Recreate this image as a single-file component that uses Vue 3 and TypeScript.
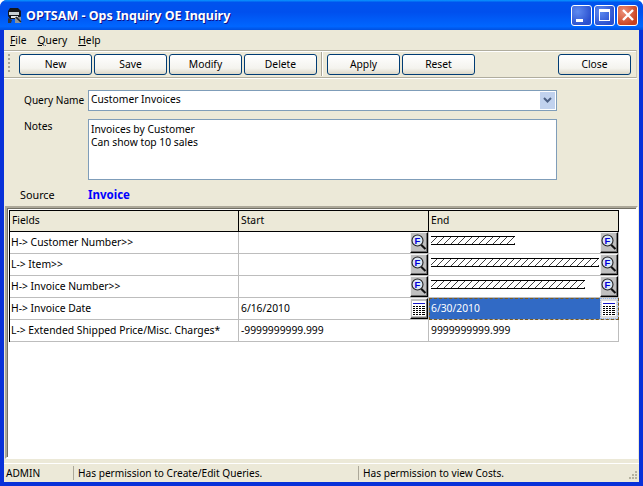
<script setup lang="ts">
interface Row { field: string; start: string; end: string; startBtn: 'find' | 'cal' | ''; endBtn: 'find' | 'cal' | ''; hatch: number; sel: boolean }
const rows: Row[] = [
  { field: 'H-> Customer Number>>', start: '', end: '', startBtn: 'find', endBtn: 'find', hatch: 84, sel: false },
  { field: 'L-> Item>>', start: '', end: '', startBtn: 'find', endBtn: 'find', hatch: 168, sel: false },
  { field: 'H-> Invoice Number>>', start: '', end: '', startBtn: 'find', endBtn: 'find', hatch: 154, sel: false },
  { field: 'H-> Invoice Date', start: '6/16/2010', end: '6/30/2010', startBtn: 'cal', endBtn: 'cal', hatch: 0, sel: true },
  { field: 'L-> Extended Shipped Price/Misc. Charges*', start: '-9999999999.999', end: '9999999999.999', startBtn: '', endBtn: '', hatch: 0, sel: false },
]
const menus = [['F', 'ile'], ['Q', 'uery'], ['H', 'elp']]
const group1 = ['New', 'Save', 'Modify', 'Delete']
const group2 = ['Apply', 'Reset']
</script>

<template>
  <div class="win">
    <div class="title">
      <svg class="appicon" width="18" height="18" viewBox="0 0 18 18">
        <path d="M4 2h8l3 3v5l-2 3H4L2 10V5z" fill="#15171c"/>
        <path d="M3 6h10v3H3z" fill="#c8d0d4"/>
        <path d="M5 10h7v2H5z" fill="#e4e6e6"/>
        <path d="M9 11h6v6H9z" fill="#8f9498"/>
        <path d="M2 12l4 2-1 3H2z" fill="#30343c"/>
        <path d="M10 11l5 5" stroke="#22262c" stroke-width="1.500"/>
      </svg>
      <span class="title-text">OPTSAM - Ops Inquiry OE Inquiry</span>
      <div class="caps">
        <span class="cap"><i class="min"></i></span>
        <span class="cap"><i class="max"></i></span>
        <span class="cap close">
          <svg width="14" height="14" viewBox="0 0 14 14"><path d="M2 2l10 10M12 2L2 12" stroke="#fff" stroke-width="2.400"/></svg>
        </span>
      </div>
    </div>
    <div class="body">
      <div class="menu">
        <span v-for="m in menus" :key="m[0]" class="menu-item"><u>{{ m[0] }}</u>{{ m[1] }}</span>
      </div>
      <div class="toolbar">
        <span class="grip"></span>
        <button v-for="b in group1" :key="b" class="btn">{{ b }}</button>
        <span class="sep"></span>
        <button v-for="b in group2" :key="b" class="btn">{{ b }}</button>
        <span class="spacer"></span>
        <button class="btn">Close</button>
      </div>
      <div class="form">
        <div class="frow name-row">
          <label class="lbl">Query Name</label>
          <div class="combo">
            <span class="combo-text">Customer Invoices</span>
            <span class="arrow">
              <svg width="9" height="7" viewBox="0 0 9 7"><path d="M1 1l3.500 3.500L8 1" fill="none" stroke="#4d6185" stroke-width="2"/></svg>
            </span>
          </div>
        </div>
        <div class="frow notes-row">
          <label class="lbl">Notes</label>
          <div class="notes">Invoices by Customer<br>Can show top 10 sales</div>
        </div>
        <div class="frow source-row">
          <label class="lbl src">Source</label>
          <span class="src-val">Invoice</span>
        </div>
      </div>
      <div class="frame">
        <svg width="0" height="0" class="defs">
          <defs>
            <pattern id="hatchp" width="7" height="7" patternUnits="userSpaceOnUse">
              <path d="M0 7L7 0" stroke="#000" stroke-width=".75"/>
            </pattern>
          </defs>
        </svg>
        <div class="grid">
          <div class="ghead">
            <div class="hc c1">Fields</div>
            <div class="hc c2">Start</div>
            <div class="hc c3">End</div>
          </div>
          <div v-for="r in rows" :key="r.field" class="grow">
            <div class="cell c1">{{ r.field }}</div>
            <div class="cell c2">
              <span class="val">{{ r.start }}</span>
              <span v-if="r.startBtn" class="gbtn">
                <svg v-if="r.startBtn === 'find'" width="16" height="17" viewBox="0 0 16 17">
                  <path d="M10 10.500l4.500 4.500" stroke="#111" stroke-width="2.200"/>
                  <path d="M11 10l4 4" stroke="#888" stroke-width=".7"/>
                  <circle cx="6.500" cy="6.500" r="5.500" fill="#dce6f4" stroke="#222" stroke-width="1.100"/>
                  <text x="6.500" y="10" text-anchor="middle" class="ftext">F</text>
                </svg>
                <svg v-else width="14" height="15" viewBox="0 0 14 15" shape-rendering="crispEdges">
                  <rect x="0" y="0" width="14" height="15" fill="#fff"/>
                  <path d="M1 2h12v1H1z" fill="#1414c8"/>
                  <path d="M1 5h2v1H1zM4 5h2v1H4zM7 5h2v1H7zM10 5h3v1h-3zM1 7h2v1H1zM4 7h2v1H4zM7 7h2v1H7zM10 7h3v1h-3zM1 9h2v1H1zM4 9h2v1H4zM7 9h2v1H7zM10 9h3v1h-3zM1 11h2v1H1zM4 11h2v1H4zM7 11h2v1H7zM10 11h3v1h-3zM1 13h2v1H1zM4 13h2v1H4zM7 13h2v1H7zM10 13h3v1h-3z" fill="#000"/>
                </svg>
              </span>
            </div>
            <div class="cell c3" :class="{ sel: r.sel }">
              <span class="val">{{ r.end }}</span>
              <svg v-if="r.hatch" class="hatch" :width="r.hatch" height="10">
                <rect x="0" y="1" :width="r.hatch" height="7" fill="url(#hatchp)"/>
                <path :d="'M0 .5H' + r.hatch + 'M0 8.500H' + r.hatch" stroke="#000" stroke-width="1"/>
              </svg>
              <span v-if="r.endBtn" class="gbtn" :class="{ selbtn: r.sel }">
                <svg v-if="r.endBtn === 'find'" width="16" height="17" viewBox="0 0 16 17">
                  <path d="M10 10.500l4.500 4.500" stroke="#111" stroke-width="2.200"/>
                  <path d="M11 10l4 4" stroke="#888" stroke-width=".7"/>
                  <circle cx="6.500" cy="6.500" r="5.500" fill="#dce6f4" stroke="#222" stroke-width="1.100"/>
                  <text x="6.500" y="10" text-anchor="middle" class="ftext">F</text>
                </svg>
                <svg v-else width="14" height="15" viewBox="0 0 14 15" shape-rendering="crispEdges">
                  <rect x="0" y="0" width="14" height="15" fill="#fff"/>
                  <path d="M1 2h12v1H1z" fill="#1414c8"/>
                  <path d="M1 5h2v1H1zM4 5h2v1H4zM7 5h2v1H7zM10 5h3v1h-3zM1 7h2v1H1zM4 7h2v1H4zM7 7h2v1H7zM10 7h3v1h-3zM1 9h2v1H1zM4 9h2v1H4zM7 9h2v1H7zM10 9h3v1h-3zM1 11h2v1H1zM4 11h2v1H4zM7 11h2v1H7zM10 11h3v1h-3zM1 13h2v1H1zM4 13h2v1H4zM7 13h2v1H7zM10 13h3v1h-3z" fill="#000"/>
                </svg>
              </span>
            </div>
          </div>
        </div>
      </div>
      <div class="status">
        <span class="st st1">ADMIN</span>
        <span class="st st2">Has permission to Create/Edit Queries.</span>
        <span class="st st3">Has permission to view Costs.</span>
        <svg class="sgrip" width="12" height="12" viewBox="0 0 12 12">
          <path d="M9 2h2v2H9zM6 5h2v2H6zM9 5h2v2H9zM3 8h2v2H3zM6 8h2v2H6zM9 8h2v2H9z" fill="#b5b29f"/>
        </svg>
      </div>
    </div>
  </div>
</template>

<style>
html, body { background: #fff; overflow: hidden; }
</style>

<style scoped>
.win {
  width: 643px;
  height: 486px;
  display: flex;
  flex-direction: column;
  overflow: hidden;
  border-radius: 7px 7px 0 0;
  background: #0831d9;
  font-family: "Noto Sans", "Liberation Sans", sans-serif;
  font-size: 10.300px;
  color: #000;
}
.title {
  height: 30px;
  flex: none;
  display: flex;
  align-items: center;
  padding: 0 5px 0 6px;
  background: linear-gradient(180deg, #0997ff 0, #0053ee 8%, #0050ee 40%, #0066ff 88%, #0050e0 100%);
}
.appicon { margin-right: 2px; }
.title-text {
  color: #fff;
  font-weight: 700;
  font-size: 12.500px;
  text-shadow: 1px 1px 0 #0f1089;
}
.caps { margin-left: auto; display: flex; gap: 2px; }
.cap {
  width: 21px;
  height: 21px;
  box-sizing: border-box;
  border: 1px solid #fff;
  border-radius: 3px;
  background: radial-gradient(circle at 30% 30%, #5f8bf0, #2a50cf 75%);
  display: flex;
  align-items: center;
  justify-content: center;
  position: relative;
}
.cap.close { background: radial-gradient(circle at 30% 30%, #ec9078, #c9411f 75%); }
.cap .min { position: absolute; left: 4px; bottom: 3px; width: 7px; height: 3px; background: #fff; }
.cap .max { width: 11px; height: 12px; box-sizing: border-box; border: 1px solid #fff; border-top-width: 3px; }
.body {
  flex: 1;
  min-height: 0;
  margin: 0 4px 4px;
  background: #ece9d8;
  display: flex;
  flex-direction: column;
}
.menu {
  height: 20px;
  flex: none;
  display: flex;
  align-items: center;
  padding-left: 6px;
  gap: 11px;
}
.toolbar {
  height: 28px;
  flex: none;
  box-sizing: border-box;
  margin: 0 2px 0 0;
  border-top: 1px solid #b0ad9e;
  border-bottom: 1px solid #b0ad9e;
  border-right: 1px solid #d0cdbc;
  box-shadow: inset 0 1px 0 #fff, 0 1px 0 #fff;
  display: flex;
  align-items: center;
  padding-left: 4px;
  padding-right: 5px;
  gap: 2px;
}
.grip {
  width: 2px;
  height: 20px;
  margin-right: 7px;
  background: repeating-linear-gradient(180deg, #a8a594 0 2px, transparent 2px 4px);
}
.sep {
  width: 2px;
  height: 24px;
  margin: 0 2px;
  background: linear-gradient(90deg, #aca899 0 1px, #fff 1px 2px);
}
.spacer { flex: 1; }
.btn {
  width: 73px;
  height: 21px;
  padding: 0 0 1px;
  box-sizing: border-box;
  border: 1px solid #003c74;
  border-radius: 3px;
  background: linear-gradient(180deg, #fff 0, #f4f3ee 70%, #dcd8c8 100%);
  font: inherit;
  color: #000;
}
.form { flex: none; padding-top: 12px; }
.frow { display: flex; }
.lbl { width: 84px; padding-left: 20px; box-sizing: border-box; }
.name-row { align-items: center; height: 21px; }
.name-row .lbl { padding-bottom: 1px; font-size: 10.100px; }
.combo {
  width: 469px;
  height: 21px;
  box-sizing: border-box;
  border: 1px solid #7f9db9;
  background: #fff;
  display: flex;
  align-items: center;
  padding: 0 1px 0 2px;
}
.combo-text { flex: 1; padding-bottom: 3px; }
.arrow {
  width: 15px;
  height: 17px;
  background: #c1d2ee;
  display: flex;
  align-items: center;
  justify-content: center;
}
.notes-row { margin-top: 8px; }
.notes {
  width: 469px;
  height: 61px;
  box-sizing: border-box;
  border: 1px solid #7f9db9;
  background: #fff;
  padding: 3px 2px;
  line-height: 13px;
}
.source-row { margin-top: 7px; align-items: center; height: 15px; }
.lbl.src { padding-left: 16px; font-size: 10.800px; }
.src-val { color: #0000ff; font-weight: 700; font-size: 11.500px; }
.frame {
  flex: 1;
  min-height: 0;
  margin: 4px 1px 0;
  box-sizing: border-box;
  border: 2px solid;
  border-color: #aca899 #fff #fff #aca899;
  background: #fff;
  padding: 2px;
  box-shadow: inset 1px 1px 0 #716f64;
}
.defs { position: absolute; }
.ghead { display: flex; height: 22px; box-sizing: border-box; border: 1px solid #000; border-right: 0; width: 610px; background: #ece9d8; }
.hc { box-sizing: border-box; border-right: 1px solid #000; padding: 2px 2px 0; }
.ghead .c1 { width: 229px; }
.ghead .c2 { width: 190px; }
.ghead .c3 { width: 190px; }
.grow { display: flex; height: 22px; width: 610px; box-sizing: border-box; border-left: 1px solid #000; }
.cell {
  box-sizing: border-box;
  border-right: 1px solid #bdbdbd;
  border-bottom: 1px solid #bdbdbd;
  position: relative;
  padding: 3px 2px 0;
  white-space: nowrap;
}
.grow .c1 { width: 229px; padding-left: 1px; font-size: 10.350px; }
.grow .c2 { width: 190px; }
.grow .c3 { width: 190px; }
.val { display: inline-block; }
.gbtn {
  position: absolute;
  right: 0;
  top: 0;
  width: 18px;
  height: 21px;
  box-sizing: border-box;
  background: #c0c0c0;
  border: 1px solid;
  border-color: #f4f4f4 #000 #000 #f4f4f4;
  box-shadow: inset -1px -1px 0 #707070;
  display: flex;
  align-items: center;
  justify-content: center;
}
.gbtn.selbtn { background: #dcdcdc; border: 1px dotted #8fb4ee; box-shadow: none; }
.sel { background: #316ac5; color: #fff; outline: 1px dashed #7a5a20; outline-offset: -1px; }
.hatch { position: absolute; left: 2px; top: 4px; display: block; }
.ftext { font-family: "Liberation Sans", sans-serif; font-size: 9.500px; font-weight: 700; fill: #0000d8; }
.status {
  height: 19px;
  flex: none;
  margin-top: 4px;
  display: flex;
  align-items: center;
  position: relative;
  box-shadow: inset 0 1px 0 #fff;
  font-size: 10.150px;
  padding-top: 1px;
  box-sizing: border-box;
}
.st { box-sizing: border-box; white-space: nowrap; padding-left: 2px; }
.st1 { width: 69px; }
.st2 { width: 285px; border-left: 1px solid #aca899; padding-left: 4px; }
.st3 { border-left: 1px solid #aca899; padding-left: 4px; }
.sgrip { position: absolute; right: 1px; bottom: 1px; }
</style>
